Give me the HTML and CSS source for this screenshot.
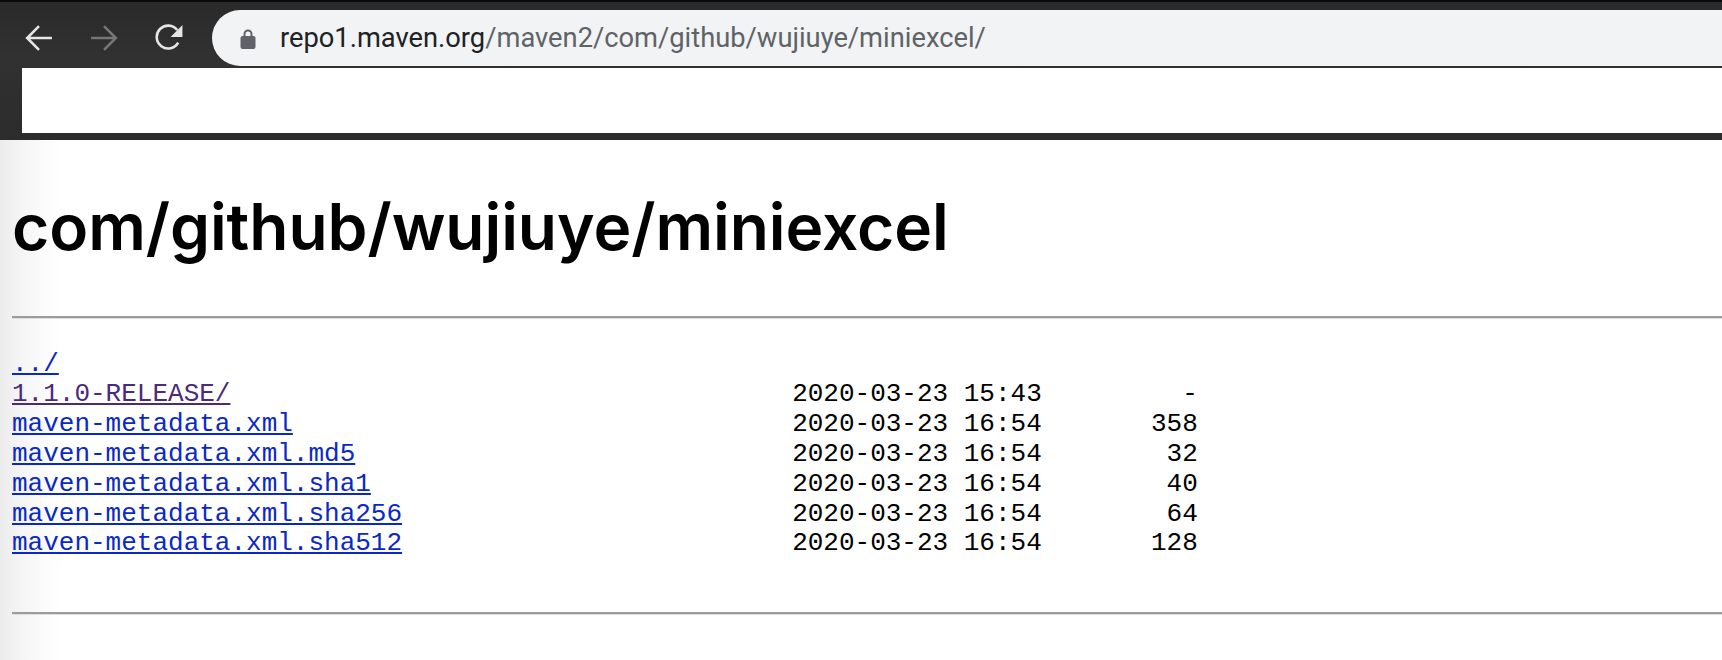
FILE: index.html
```html
<!DOCTYPE html>
<html lang="en">
<head>
<meta charset="utf-8">
<title>com/github/wujiuye/miniexcel</title>
<link rel="stylesheet" href="styles.css">
</head>
<body>
<header class="chrome">
  <div class="toolbar">
    <svg class="nav-icon back" viewBox="0 0 26 26" aria-hidden="true"><path d="M25 13H2M13 2 2 13l11 11"/></svg>
    <svg class="nav-icon forward" viewBox="0 0 26 26" aria-hidden="true"><path d="M1 13h23M13 2l11 11-11 11"/></svg>
    <svg class="nav-icon reload" viewBox="0 0 26 26" aria-hidden="true"><path d="M21.5 17.2A10.6 10.6 0 1 1 20.6 5.6"/><path class="fill" d="M25.5 1v11h-11z"/></svg>
    <div class="omnibox">
      <svg class="lock" viewBox="0 0 15 21" aria-hidden="true"><path d="M3 9V6a4.5 4.5 0 0 1 9 0v3h-2V6a2.500 2.500 0 0 0-5 0v3z"/><rect y="8" width="15" height="13" rx="2"/></svg>
      <span class="url"><span class="host">repo1.maven.org</span>/maven2/com/github/wujiuye/miniexcel/</span>
    </div>
  </div>
  <div class="bookmarks"></div>
</header>
<main class="page">
  <h1 class="title">com/github/wujiuye/miniexcel</h1>
  <hr class="rule">
  <pre class="listing"><a class="link" href="#">../</a>
<a class="link visited" href="#">1.1.0-RELEASE/</a>                                    2020-03-23 15:43         -
<a class="link" href="#">maven-metadata.xml</a>                                2020-03-23 16:54       358
<a class="link" href="#">maven-metadata.xml.md5</a>                            2020-03-23 16:54        32
<a class="link" href="#">maven-metadata.xml.sha1</a>                           2020-03-23 16:54        40
<a class="link" href="#">maven-metadata.xml.sha256</a>                         2020-03-23 16:54        64
<a class="link" href="#">maven-metadata.xml.sha512</a>                         2020-03-23 16:54       128</pre>
  <hr class="rule">
</main>
</body>
</html>
```
FILE: styles.css
```css
* { box-sizing: border-box; }
html, body { margin: 0; height: 100%; }
body { width: 1722px; height: 660px; overflow: hidden; background: #fff; }

.chrome { height: 140px; background: linear-gradient(#2a2a2a, #313131 40%, #2c2c2c); border-top: 2px solid #0a0a0a; display: flex; flex-direction: column; }
.toolbar { display: flex; align-items: center; height: 64px; padding: 8px 0 0 25px; flex: none; }
.nav-icon { width: 28px; height: 28px; flex: none; fill: none; stroke-width: 2.4; stroke: #e6e6e6; }
.forward { margin-left: 37px; stroke: #767676; }
.reload { margin-left: 37px; }
.reload .fill { fill: #e6e6e6; stroke: none; }
.omnibox { margin-left: 29px; flex: 1; height: 56px; background: #f1f3f4; border-radius: 28px 0 0 28px; display: flex; align-items: center; padding-left: 28px; }
.lock { width: 16px; height: 21px; fill: #5f6368; flex: none; }
.url { margin-left: 24px; font: 27.3px Roboto, sans-serif; color: #5f6368; white-space: nowrap; }
.host { color: #202124; }
.bookmarks { margin: 2px 0 0 22px; height: 65px; background: #fff; flex: none; }

.page { padding: 0 0 0 12px; height: 520px; background: linear-gradient(90deg, #ececec 0, #f6f6f6 25px, #fff 60px); }
.title { margin: 0; padding-top: 47px; height: 176px; font: 600 64px/80px Inter, sans-serif; color: #000; letter-spacing: -0.05px; }
.rule { margin: 0; height: 3px; border: 0; border-top: 2px solid #9c9c9c; border-bottom: 1px solid #dedede; }
.listing { margin: 31px 0 53px; font: 26px/29.9px "Liberation Mono", monospace; color: #000; }
.link { color: #0a28c8; }
.visited { color: #4a2a7a; }
```
